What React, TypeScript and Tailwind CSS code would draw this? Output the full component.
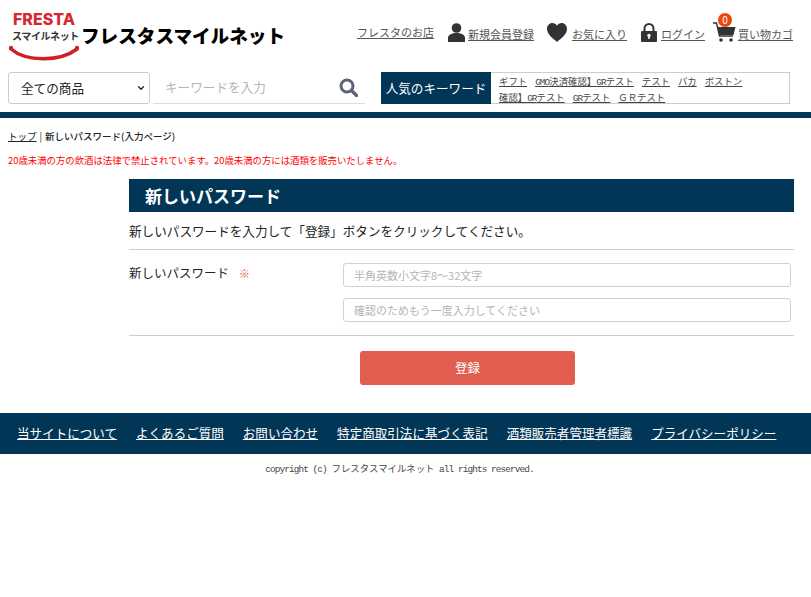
import { ChevronDown } from "lucide-react";

const jp = "font-['Noto_Sans_CJK_JP',sans-serif]";

const footerLinks = [
  "当サイトについて",
  "よくあるご質問",
  "お問い合わせ",
  "特定商取引法に基づく表記",
  "酒類販売者管理者標識",
  "プライバシーポリシー",
];

// half-width latin, as in the reference's gothic font
function Han({ children }: { children: React.ReactNode }) {
  return <span className="font-['Liberation_Mono',monospace] tracking-[-0.9px]">{children}</span>;
}

function Logo() {
  return (
    <div className="flex items-center">
      <div className="relative h-[48px] w-[72px] shrink-0">
        <div className="pl-[5px] font-['Inter',sans-serif] text-[16px] font-extrabold leading-[15px] text-[#d7282f]">
          FRESTA
        </div>
        <div className="mt-[2px] whitespace-nowrap pl-[4px] text-[10px] font-bold leading-[13px] tracking-[-0.4px] text-[#333]">
          スマイルネット
        </div>
        <svg className="absolute left-0 top-[30px]" width="72" height="20" viewBox="0 0 72 20">
          <path d="M3 7 C 18 20, 52 20, 69 7" fill="none" stroke="#d01f26" strokeWidth="3.5" strokeLinecap="round" />
          <circle cx="3" cy="6" r="2.2" fill="#d01f26" />
          <circle cx="69" cy="6" r="2.2" fill="#d01f26" />
        </svg>
      </div>
      <div className="ml-[1px] mt-[-1px] whitespace-nowrap text-[18.6px] font-black leading-none text-black">
        フレスタスマイルネット
      </div>
    </div>
  );
}

function NavLink({ children }: { children: React.ReactNode }) {
  return <a className="whitespace-nowrap text-[11px] leading-[14px] text-[#555] underline">{children}</a>;
}

export default function App() {
  return (
    <div className={`min-h-[597px] bg-white text-[#222] ${jp}`}>
      <header className="flex h-[72px] items-start justify-between pl-[8px] pr-[18px] pt-[12px]">
        <Logo />
        <nav className="flex items-center pt-[8px]">
          <NavLink>フレスタのお店</NavLink>
          <svg className="ml-[14px]" width="17" height="19" viewBox="0 0 17 19" fill="#333">
            <circle cx="8.5" cy="5" r="4.8" />
            <path d="M0 19 V15 C0 11.5 4 10 8.5 10 C13 10 17 11.5 17 15 V19 Z" />
          </svg>
          <div className="ml-[3px]"><NavLink>新規会員登録</NavLink></div>
          <svg className="ml-[13px]" width="20" height="19" viewBox="0 0 20 19" fill="#333">
            <path d="M10 19 C6 15.5 0 11.5 0 5.8 C0 2.5 2.5 0 5.3 0 C7.3 0 9 1 10 2.8 C11 1 12.7 0 14.7 0 C17.5 0 20 2.5 20 5.8 C20 11.5 14 15.5 10 19 Z" />
          </svg>
          <div className="ml-[5px]"><NavLink>お気に入り</NavLink></div>
          <svg className="ml-[14px]" width="16" height="19" viewBox="0 0 16 19">
            <path d="M3.5 9 V5.5 C3.5 2.8 5.5 1 8 1 C10.5 1 12.5 2.8 12.5 5.5 V9" fill="none" stroke="#333" strokeWidth="2" />
            <rect x="0" y="8" width="16" height="11" rx="1" fill="#333" />
            <circle cx="8" cy="12.5" r="1.7" fill="#fff" />
            <rect x="7.2" y="13" width="1.6" height="3" fill="#fff" />
          </svg>
          <div className="ml-[4px]"><NavLink>ログイン</NavLink></div>
          <div className="relative ml-[8px] h-[20px] w-[23px]">
            <svg width="23" height="20" viewBox="0 0 23 20" fill="#333">
              <path d="M0 1 H3.5 L6.5 14 H20" fill="none" stroke="#333" strokeWidth="1.4" />
              <path d="M4.5 5 H22.5 L20.5 13 H6.3 Z" />
              <circle cx="8" cy="18" r="1.8" />
              <circle cx="18" cy="18" r="1.8" />
            </svg>
            <span className="absolute left-[5px] top-[-9px] flex h-[14px] w-[14px] items-center justify-center rounded-full bg-[#e8490f] text-[10px] leading-none text-white">
              0
            </span>
          </div>
          <div className="ml-[2px]"><NavLink>買い物カゴ</NavLink></div>
        </nav>
      </header>

      <div className="flex h-[32px] pl-[8px] pr-[21px]">
        <div className="flex h-[32px] w-[142px] items-center justify-between rounded-[3px] border border-[#ccc] pl-[12px] pr-[3px] text-[12.6px] text-[#222]">
          <span>全ての商品</span>
          <ChevronDown size={10} strokeWidth={3} />
        </div>
        <div className="ml-[3px] flex h-[32px] w-[212px] items-center justify-between border-b border-[#ddd] pl-[12px] pr-[7px]">
          <span className="text-[12.6px] text-[#b5b5b5]">キーワードを入力</span>
          <svg width="19" height="19" viewBox="0 0 19 19" fill="none" stroke="#5d6478">
            <circle cx="8" cy="8" r="6" strokeWidth="3" />
            <path d="M12.5 12.5 L17.5 17.5" strokeWidth="3.4" strokeLinecap="round" />
          </svg>
        </div>
        <div className="ml-[16px] flex h-[32px] flex-1 border border-[#ccc]">
          <div className="-m-px mr-0 flex h-[32px] w-[110px] shrink-0 items-center justify-center bg-[#023656] text-[12.6px] text-white">
            人気のキーワード
          </div>
          <div className="pl-[8px] text-[9.4px] leading-[14px] text-[#444]">
            <div className="flex gap-[8px] pt-[1px]">
              <a className="whitespace-nowrap underline">ギフト</a>
              <a className="whitespace-nowrap underline"><Han>GMO</Han>決済確認】<Han>GR</Han>テスト</a>
              <a className="whitespace-nowrap underline">テスト</a>
              <a className="whitespace-nowrap underline">バカ</a>
              <a className="whitespace-nowrap underline">ボストン</a>
            </div>
            <div className="flex gap-[8px]">
              <a className="whitespace-nowrap underline">確認】<Han>GR</Han>テスト</a>
              <a className="whitespace-nowrap underline"><Han>GR</Han>テスト</a>
              <a className="whitespace-nowrap underline">ＧＲテスト</a>
            </div>
          </div>
        </div>
      </div>

      <div className="mt-[8px] h-[6px] bg-[#023656]" />

      <div className="pl-[8px] pt-[11px] text-[9.5px] leading-[14px] text-[#222]">
        <a className="underline">トップ</a>
        <span className="mx-[3px]">|</span>
        <span className="font-medium">新しいパスワード(入力ページ)</span>
      </div>
      <p className="pl-[8px] pt-[10px] text-[9.4px] leading-[14px] text-[#f00]">
        20歳未満の方の飲酒は法律で禁止されています。20歳未満の方には酒類を販売いたしません。
      </p>

      <main className="ml-[129px] mr-[17px] mt-[12px]">
        <h1 className="flex h-[33px] items-center bg-[#023656] pl-[16px] text-[17px] font-bold text-white">
          新しいパスワード
        </h1>
        <p className="flex h-[38px] items-center border-b border-[#ccc] pt-[2px] text-[12.6px] text-[#222]">
          新しいパスワードを入力して「登録」ボタンをクリックしてください。
        </p>
        <div className="flex border-b border-[#ccc] py-[13px]">
          <div className="w-[214px] shrink-0 text-[12.5px] leading-[19px]">
            新しいパスワード
            <span className="ml-[10px] text-[11px] text-[#e05c50]">※</span>
          </div>
          <div className="flex flex-1 flex-col gap-[11px] pr-[3px]">
            <div className="flex h-[24px] items-center rounded-[3px] border border-[#ccd2d5] pl-[10px] text-[11px] text-[#b5b5b5]">
              半角英数小文字8～32文字
            </div>
            <div className="flex h-[24px] items-center rounded-[3px] border border-[#ccd2d5] pl-[10px] text-[11px] text-[#b5b5b5]">
              確認のためもう一度入力してください
            </div>
          </div>
        </div>
        <div className="flex justify-center pl-[12px] pt-[15px]">
          <button className="h-[34px] w-[215px] rounded-[3px] bg-[#e05d50] text-[12.5px] text-white">登録</button>
        </div>
      </main>

      <footer className="mt-[28px]">
        <div className="flex h-[41px] items-center gap-[19px] bg-[#023656] pl-[17px] text-[12.56px] text-white">
          {footerLinks.map((l) => (
            <a key={l} className="whitespace-nowrap underline">{l}</a>
          ))}
        </div>
        <p className="pr-[12px] pt-[7px] text-center text-[9.4px] leading-[14px] text-[#444]">
          <Han>copyright (c) </Han>フレスタスマイルネット<Han> all rights reserved.</Han>
        </p>
      </footer>
    </div>
  );
}
